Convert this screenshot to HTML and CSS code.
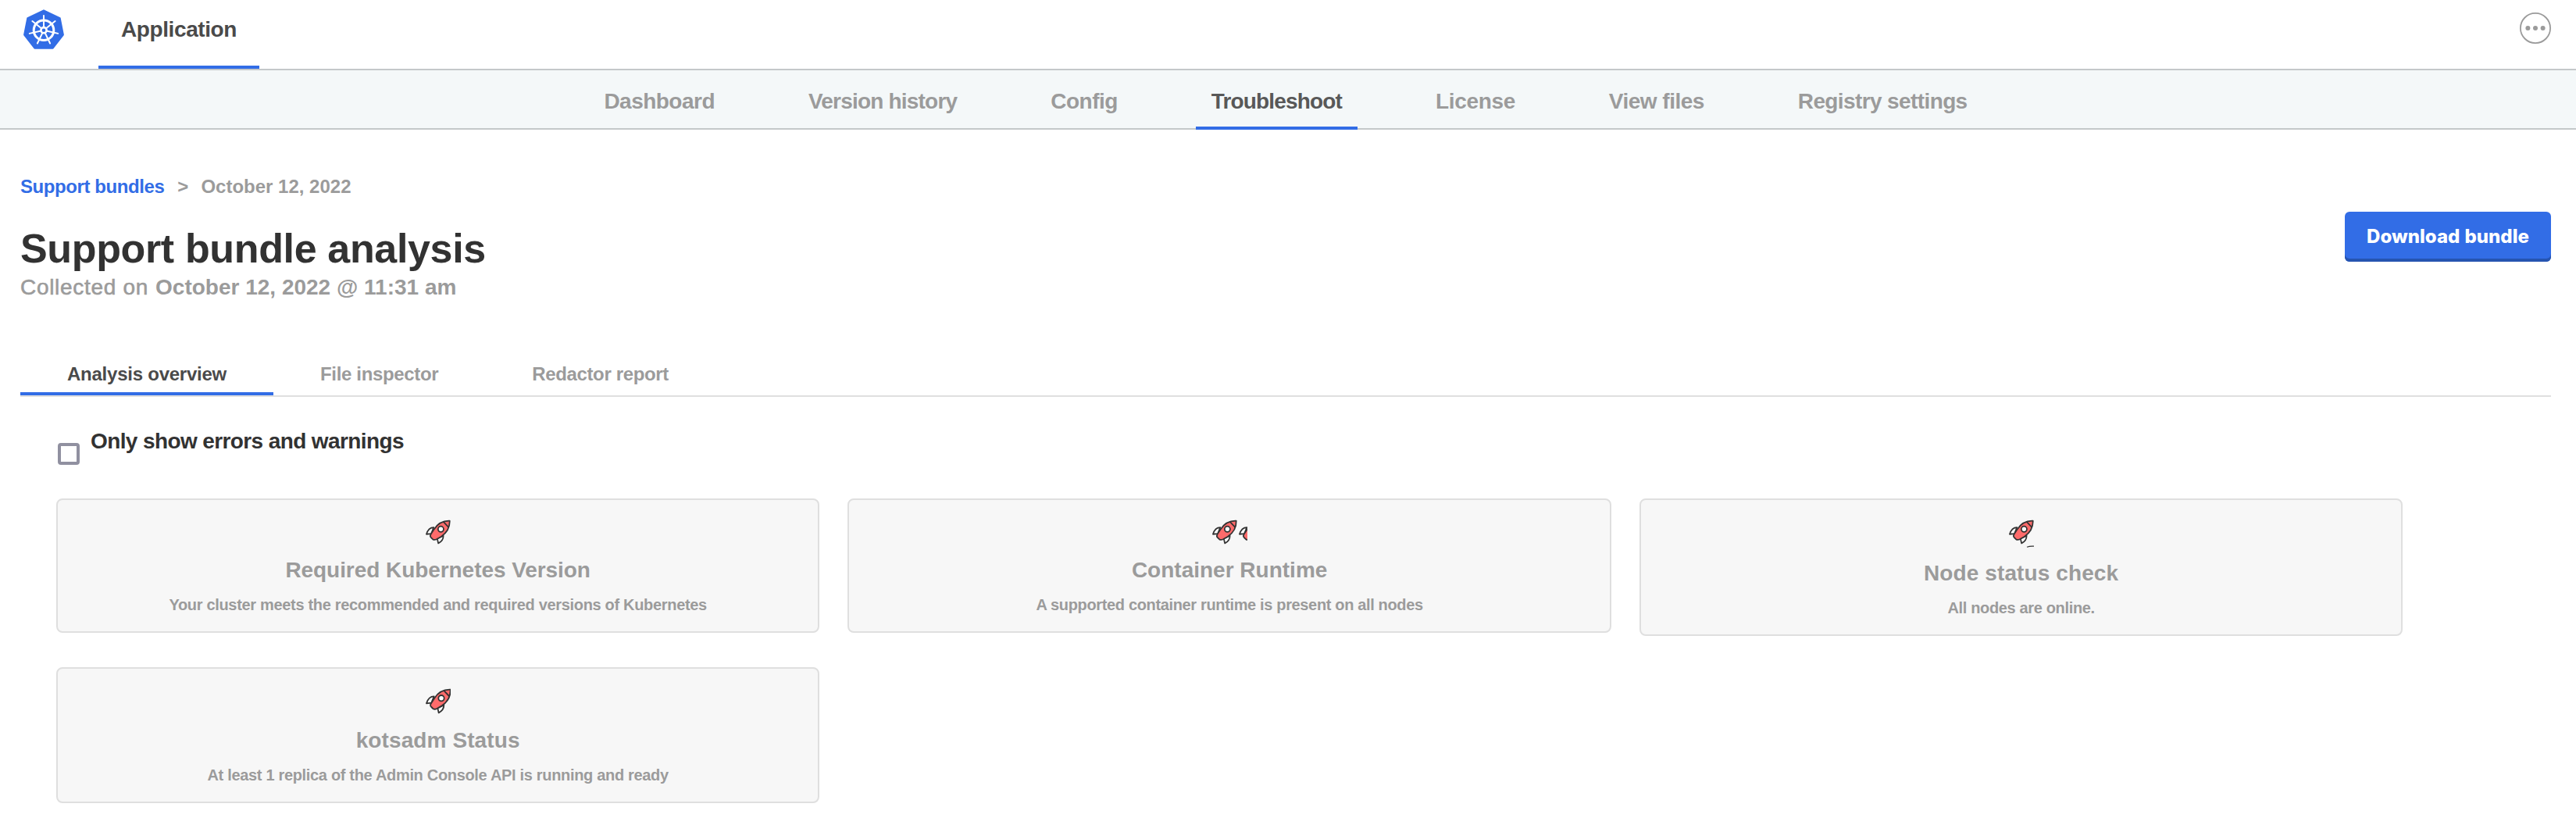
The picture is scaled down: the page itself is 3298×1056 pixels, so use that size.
FILE: index.html
```html
<!DOCTYPE html>
<html lang="en">
<head>
<meta charset="utf-8">
<title>Support bundle analysis</title>
<link rel="stylesheet" href="styles.css">
</head>
<body>
<svg class="defs" aria-hidden="true">
  <symbol id="rocket" viewBox="-3 -1 102 97" overflow="visible">
    <path d="M32 29C17 29 8 39 3 56L22 54Z" fill="#fff"/>
    <path d="M70 62C70 76 62 86 50 92L46 74Z" fill="#fff"/>
    <path d="M95 3C67 2 46 16 33 37L20 57C17 63 18 67 22 70L28 76C32 79 37 79 43 76L62 65C84 50 96 31 95 3Z" fill="#ff6b6b"/>
    <path d="M71 8L90 28" fill="none"/>
    <circle cx="60" cy="36" r="11" fill="#fff"/>
  </symbol>
</svg>

<header class="topbar">
  <svg class="logo" viewBox="0 0 52 52">
    <path d="M26 1.5L46.5 11.3L50.7 32.5L37.5 49.5H14.5L1.3 32.5L5.5 11.3Z" fill="#326de6" stroke="#326de6" stroke-width="2.4" stroke-linejoin="round"/>
    <g stroke="#fff" stroke-linecap="round" fill="none">
      <circle cx="26" cy="26.7" r="12.8" stroke-width="3"/>
      <g stroke-width="2">
        <path d="M26 22V8"/>
        <path d="M26 22V8" transform="rotate(51.43 26 26.7)"/>
        <path d="M26 22V8" transform="rotate(102.86 26 26.7)"/>
        <path d="M26 22V8" transform="rotate(154.29 26 26.7)"/>
        <path d="M26 22V8" transform="rotate(205.71 26 26.7)"/>
        <path d="M26 22V8" transform="rotate(257.14 26 26.7)"/>
        <path d="M26 22V8" transform="rotate(308.57 26 26.7)"/>
      </g>
      <circle cx="26" cy="26.7" r="3.6" stroke-width="2.6"/>
    </g>
  </svg>
  <a class="app-tab">Application</a>
  <svg class="more" viewBox="0 0 40 40">
    <circle cx="20" cy="20" r="19.1" fill="none" stroke="#9b9b9b" stroke-width="1.8"/>
    <g fill="#9b9b9b"><circle cx="10.4" cy="20" r="3"/><circle cx="20" cy="20" r="3"/><circle cx="29.6" cy="20" r="3"/></g>
  </svg>
</header>

<nav class="subnav">
  <a class="nav-item ls-5">Dashboard</a>
  <a class="nav-item ls-8">Version history</a>
  <a class="nav-item ls-5">Config</a>
  <a class="nav-item ls-9 active">Troubleshoot</a>
  <a class="nav-item ls-4">License</a>
  <a class="nav-item ls-5">View files</a>
  <a class="nav-item ls-6">Registry settings</a>
</nav>

<main class="page">
  <div class="page-head">
    <div>
      <div class="crumbs"><a class="crumb-link">Support bundles</a><span class="crumb-sep">&gt;</span><span>October 12, 2022</span></div>
      <h1 class="title">Support bundle analysis</h1>
      <p class="collected"><span class="collected-label">Collected on</span><b>October 12, 2022 @ 11:31 am</b></p>
    </div>
    <button class="download">Download bundle</button>
  </div>

  <div class="tabs">
    <a class="tab ls-2 active">Analysis overview</a>
    <a class="tab ls-4">File inspector</a>
    <a class="tab ls-4">Redactor report</a>
  </div>

  <label class="filter"><span class="checkbox"></span><span class="ls-6">Only show errors and warnings</span></label>

  <div class="cards">
    <section class="card">
      <svg class="icon" width="33" height="32"><use href="#rocket" width="33" height="32"/></svg>
      <h2 class="card-title ls-1">Required Kubernetes Version</h2>
      <p class="card-text ls-3">Your cluster meets the recommended and required versions of Kubernetes</p>
    </section>
    <section class="card">
      <svg class="icon" width="46" height="32"><use href="#rocket" width="33" height="32"/><use href="#rocket" x="34" width="33" height="32"/></svg>
      <h2 class="card-title">Container Runtime</h2>
      <p class="card-text ls-4">A supported container runtime is present on all nodes</p>
    </section>
    <section class="card">
      <svg class="icon" width="33" height="36"><use href="#rocket" width="33" height="32"/><path d="M24 35.2Q28 33.8 33 34.2" fill="none" stroke="#333" stroke-width="1.2"/></svg>
      <h2 class="card-title ls-up-1">Node status check</h2>
      <p class="card-text ls-4">All nodes are online.</p>
    </section>
    <section class="card">
      <svg class="icon" width="33" height="34"><use href="#rocket" width="34" height="33"/></svg>
      <h2 class="card-title ls-up-1">kotsadm Status</h2>
      <p class="card-text ls-3">At least 1 replica of the Admin Console API is running and ready</p>
    </section>
  </div>
</main>
</body>
</html>
```
FILE: styles.css
```css
* { box-sizing: border-box; }
body {
  margin: 0;
  background: #fff;
  color: #323232;
  font-family: "Liberation Sans", Arial, sans-serif;
  font-weight: 700;
  font-size: 28px;
}
h1, h2, p { margin: 0; }
.defs { display: none; }
#rocket { stroke: #333; stroke-width: 5.5; stroke-linejoin: round; stroke-linecap: round; }

/* tracking per label */
.ls-1 { letter-spacing: -0.06px; }
.ls-2 { letter-spacing: -0.24px; }
.ls-3 { letter-spacing: -0.32px; }
.ls-4 { letter-spacing: -0.35px; }
.ls-5 { letter-spacing: -0.52px; }
.ls-6 { letter-spacing: -0.61px; }
.ls-8 { letter-spacing: -0.8px; }
.ls-9 { letter-spacing: -0.84px; }
.ls-up-1 { letter-spacing: 0.1px; }

.topbar {
  display: flex;
  align-items: flex-start;
  height: 90px;
  padding: 0 32px 0 30px;
  border-bottom: 2px solid #c4c8ca;
}
.logo { width: 52px; height: 52px; margin-top: 12px; }
.app-tab {
  width: 206px;
  height: 88px;
  margin-left: 44px;
  border-bottom: 4px solid #326de6;
  color: #4a4a4a;
  line-height: 75px;
  letter-spacing: -0.4px;
  text-align: center;
}
.more { width: 40px; height: 40px; margin: 16px 0 0 auto; }

.subnav {
  display: flex;
  justify-content: center;
  gap: 80px;
  height: 76px;
  padding-right: 6px;
  background: #f4f8f9;
  border-bottom: 2px solid #c4c8ca;
}
.nav-item {
  height: 76px;
  padding: 4px 20px 0;
  color: #9b9b9b;
  line-height: 71px;
}
.nav-item.active { color: #585858; border-bottom: 4px solid #326de6; }

.page { padding: 58px 32px 0 26px; }
.page-head { display: flex; justify-content: space-between; align-items: flex-start; }
.crumbs { color: #9b9b9b; font-size: 24px; line-height: 30px; }
.crumb-link { color: #326de6; letter-spacing: -0.42px; }
.crumb-sep { margin: 0 16px 0 17px; }
.title {
  margin-top: 34px;
  font-size: 52px;
  line-height: 60px;
  letter-spacing: -0.35px;
}
.collected { margin-top: 3px; color: #9b9b9b; line-height: 34px; }
.collected-label { margin-right: 9px; font-weight: 400; letter-spacing: 0.7px; -webkit-text-stroke: 0.6px #9b9b9b; }
.download {
  width: 264px;
  height: 64px;
  margin-top: 47px;
  padding: 0 0 2px;
  border: 0;
  border-radius: 6px;
  background: #326de6;
  box-shadow: inset 0 -4px 0 #2654b0;
  color: #fff;
  font: 800 24px Inter, sans-serif;
  word-spacing: 1px;
}

.tabs {
  display: flex;
  height: 54px;
  margin-top: 69px;
  border-bottom: 2px solid #dfdfdf;
}
.tab { padding: 0 60px; color: #9b9b9b; font-size: 24px; line-height: 49px; }
.tab.active { color: #4a4a4a; border-bottom: 4px solid #326de6; }

.filter {
  display: flex;
  gap: 14px;
  margin: 40px 0 0 48px;
  line-height: 34px;
}
.checkbox {
  width: 28px;
  height: 28px;
  margin-top: 19px;
  border: 4px solid #9090a0;
  border-radius: 4px;
  background: #fff;
}

.cards {
  display: grid;
  grid-template-columns: repeat(3, 977.3px);
  align-items: start;
  gap: 40px 36.2px;
  margin: 43px 0 0 46px;
}
.card {
  display: flex;
  flex-direction: column;
  align-items: center;
  padding: 25px 0 21px;
  border: 2px solid #dfdfdf;
  border-radius: 8px;
  background: #f7f7f7;
  color: #9b9b9b;
}
.icon { overflow: hidden; }
.card-title { margin-top: 16px; font-size: 28px; line-height: 34px; }
.card-text { margin-top: 14px; font-size: 20px; line-height: 26px; }
```
